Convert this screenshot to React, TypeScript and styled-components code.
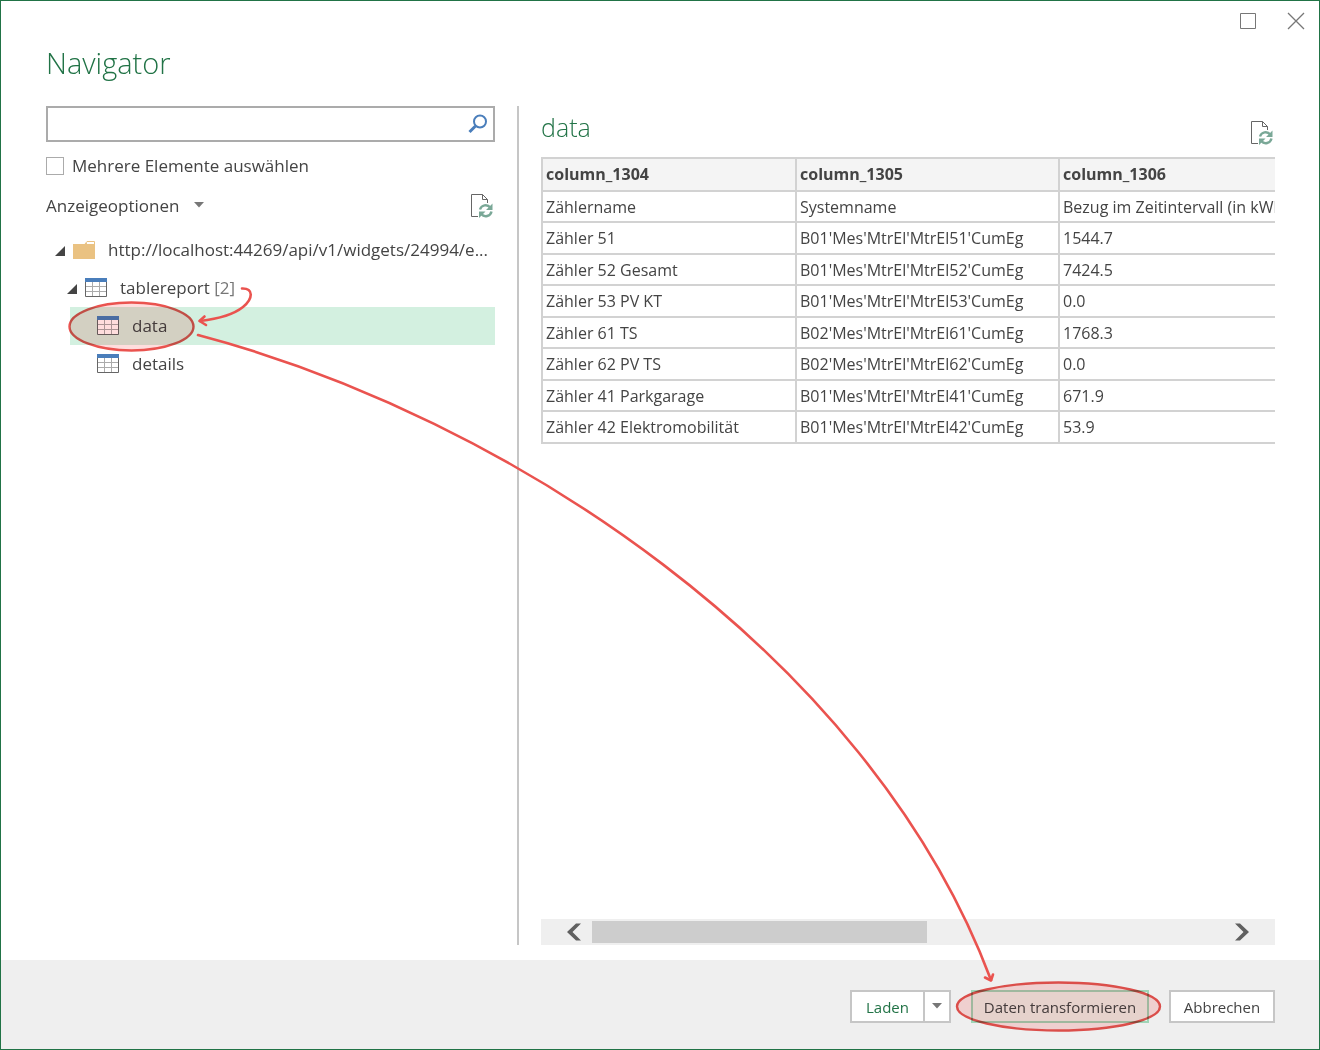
import React, { useState } from "react";
import styled, { createGlobalStyle } from "styled-components";

const green = "#217346";
const ink = "#444444";
const line = "#d2d2d2";
const fontStack = `"Open Sans", "Noto Sans", sans-serif`;

const GlobalStyle = createGlobalStyle`
  *, *::before, *::after { box-sizing: border-box; }
  body { margin: 0; background: #ffffff; }
  button, input { font: inherit; color: inherit; }
`;

const Dialog = styled.div`
  position: relative;
  display: flex;
  flex-direction: column;
  min-height: 100vh;
  border: 1px solid ${green};
  background: #ffffff;
  color: ${ink};
  font-family: ${fontStack};
  font-size: 17px;
  line-height: 24px;
  overflow: hidden;
`;

const WindowControls = styled.div`
  display: flex;
  justify-content: flex-end;
  gap: 24px;
  padding: 8px 11px 0;
`;

const PlainButton = styled.button`
  display: flex;
  align-items: center;
  justify-content: center;
  padding: 0;
  border: 0;
  background: transparent;
`;

const ControlButton = styled(PlainButton)`
  width: 24px;
  height: 24px;
`;

const Title = styled.h1`
  margin: 0;
  padding: 10px 45px 23px;
  color: ${green};
  font-size: 29px;
  font-weight: 300;
  line-height: 40px;
`;

const Content = styled.main`
  flex: 1;
  display: grid;
  grid-template-columns: 449px minmax(0, 1fr);
  gap: 22px;
  padding: 0 44px 15px 45px;
`;

const Sidebar = styled.section`
  display: flex;
  flex-direction: column;
  min-width: 0;
`;

const SearchBox = styled.div`
  display: flex;
  height: 36px;
  border: 2px solid #ababab;
`;

const SearchInput = styled.input`
  flex: 1;
  min-width: 0;
  padding: 0 8px;
  border: 0;
  outline: 0;
  background: transparent;
`;

const SearchButton = styled(PlainButton)`
  width: 30px;
`;

const CheckLabel = styled.label`
  display: flex;
  align-items: center;
  gap: 8px;
  margin-top: 12px;
`;

const Checkbox = styled.input`
  appearance: none;
  width: 18px;
  height: 18px;
  margin: 0;
  border: 1px solid #ababab;
  background: #ffffff;
  &:checked { background: ${green}; }
`;

const OptionsRow = styled.div`
  display: flex;
  align-items: center;
  justify-content: space-between;
  height: 26px;
  margin-top: 15px;
  padding-right: 2px;
`;

const OptionsButton = styled(PlainButton)`
  gap: 15px;
`;

const Tree = styled.ul`
  margin: 12px 0 0;
  padding: 0;
  list-style: none;
`;

const TreeRow = styled.li<{ $level: number; $selected?: boolean }>`
  display: flex;
  align-items: center;
  gap: 8px;
  height: 38px;
  margin-left: ${(p) => p.$level * 12}px;
  padding-left: ${(p) => (p.$level === 2 ? 27 : 9)}px;
  background: ${(p) => (p.$selected ? "#d3f0e0" : "transparent")};
`;

const TreeLabel = styled.span`
  flex: 1;
  min-width: 0;
  padding-left: 5px;
  white-space: nowrap;
`;

const Count = styled.span`
  color: #777777;
`;

const Preview = styled.section`
  display: flex;
  flex-direction: column;
  min-width: 0;
  padding-left: 22px;
  border-left: 2px solid #c6c6c6;
`;

const PreviewHeader = styled.header`
  display: flex;
  align-items: flex-end;
  justify-content: space-between;
  height: 51px;
  padding: 0 2px 12px 0;
`;

const PreviewTitle = styled.h2`
  margin: 0;
  color: ${green};
  font-size: 25px;
  font-weight: 300;
  line-height: 36px;
`;

const TableViewport = styled.div`
  flex: 1;
  overflow: hidden;
`;

const DataTable = styled.table`
  table-layout: fixed;
  width: 1456px;
  border-collapse: separate;
  border-spacing: 0;
  border-top: 2px solid ${line};
  border-left: 2px solid ${line};
  font-size: 16px;
  line-height: 20px;
`;

const HeadCell = styled.th`
  height: 33px;
  padding: 0 3px 1px;
  border-right: 2px solid ${line};
  border-bottom: 2px solid ${line};
  background: #f4f4f4;
  font-weight: 700;
  text-align: left;
`;

const Column = styled.col<{ $width?: number }>`
  width: ${(p) => (p.$width ? `${p.$width}px` : "auto")};
`;

const BodyRow = styled.tr`
  height: 31px;
  &:nth-child(even) { height: 32px; }
`;

const Cell = styled.td`
  padding: 0 3px;
  border-right: 2px solid ${line};
  border-bottom: 2px solid ${line};
  white-space: nowrap;
`;

const ScrollBar = styled.div`
  display: flex;
  align-items: center;
  height: 26px;
  padding: 0 22px;
  background: #efefef;
`;

const ScrollButton = styled(PlainButton)`
  width: 22px;
  height: 26px;
`;

const Track = styled.div`
  flex: 1;
  padding: 0 7px;
`;

const Thumb = styled.div`
  width: 53%;
  height: 22px;
  background: #cdcdcd;
`;

const Footer = styled.footer`
  display: flex;
  justify-content: flex-end;
  gap: 20px;
  padding: 30px 44px 26px;
  background: #efefef;
`;

const FooterButton = styled.button<{ $width: number; $tone?: "load" | "primary" }>`
  min-width: ${(p) => p.$width}px;
  height: 33px;
  padding: 0 8px;
  border: 2px solid ${(p) => (p.$tone === "primary" ? "#9fd5b7" : "#c6c6c6")};
  background: ${(p) => (p.$tone === "primary" ? "#e6f3ec" : "#ffffff")};
  color: ${(p) => (p.$tone === "load" ? green : ink)};
  font-size: 15px;
  line-height: 24px;
`;

const SplitButton = styled.div`
  display: flex;
`;

const SplitToggle = styled(PlainButton)`
  width: 26px;
  height: 33px;
  border: 2px solid #c6c6c6;
  border-left: 0;
  background: #ffffff;
`;

const Annotations = styled.svg`
  position: absolute;
  top: -1px;
  left: -1px;
  pointer-events: none;
`;

const HighlightLayer = styled(Annotations)`
  mix-blend-mode: multiply;
`;

const CaretDown = () => (
  <svg width="10" height="8" viewBox="0 0 10 8" aria-hidden="true">
    <path d="M0 0h10L5 5.500z" fill="#777777" />
  </svg>
);

const Expander = () => (
  <svg width="10" height="12" viewBox="0 0 10 12" aria-hidden="true">
    <path d="M10 2v10H0z" fill="#444444" />
  </svg>
);

const FolderIcon = () => (
  <svg width="22" height="20" viewBox="0 0 22 20" aria-hidden="true">
    <path d="M12 4 14 1.500h7.500V5" fill="#ffffff" stroke="#eac282" />
    <path d="M0 4h12l2-1.500V4h8v15H0z" fill="#eac282" />
  </svg>
);

const TableIcon = () => (
  <svg width="22" height="20" viewBox="0 0 22 20" aria-hidden="true">
    <path d="M.5 4v14.500h21V4" fill="#ffffff" stroke="#666666" />
    <path d="M1 8.500h20M1 13.500h20M7.500 4v14M14.500 4v14" stroke="#ababab" />
    <path d="M0 0h22v4H0z" fill="#4a7ebb" />
  </svg>
);

const RefreshIcon = () => (
  <svg width="22" height="24" viewBox="0 0 22 24" aria-hidden="true">
    <path d="M7 22.500H.5V.5h11l5 5V9M11.500.5v5h5" fill="none" stroke="#666666" />
    <g fill="none" stroke="#7aa897" strokeWidth="2.400">
      <path d="M9 15.500a5.800 5.800 0 0 1 10.200-2" />
      <path d="M20.500 17.500a5.800 5.800 0 0 1-10.200 2.500" />
    </g>
    <path d="M21.500 9.500v6.500h-6.500zM8 24v-6.500h6.500z" fill="#7aa897" />
  </svg>
);

const SearchIcon = () => (
  <svg width="20" height="20" viewBox="0 0 20 20" fill="none" stroke="#4a7ebb" aria-hidden="true">
    <circle cx="12" cy="7.500" r="6" strokeWidth="2" />
    <path d="M7.500 12 1.500 18" strokeWidth="3" />
  </svg>
);

const Chevron = ({ right }: { right?: boolean }) => (
  <svg width="14" height="18" viewBox="0 0 14 18" aria-hidden="true">
    <path
      d={right ? "M0 0.500h5l9 8.500-9 8.500H0L8.500 9z" : "M14 .5H9L0 9l9 8.500h5L5.500 9z"}
      fill="#606060"
    />
  </svg>
);

const columns = ["column_1304", "column_1305", "column_1306"];

const rows = [
  ["Zählername", "Systemname", "Bezug im Zeitintervall (in kWh)"],
  ["Zähler 51", "B01'Mes'MtrEl'MtrEl51'CumEg", "1544.7"],
  ["Zähler 52 Gesamt", "B01'Mes'MtrEl'MtrEl52'CumEg", "7424.5"],
  ["Zähler 53 PV KT", "B01'Mes'MtrEl'MtrEl53'CumEg", "0.0"],
  ["Zähler 61 TS", "B02'Mes'MtrEl'MtrEl61'CumEg", "1768.3"],
  ["Zähler 62 PV TS", "B02'Mes'MtrEl'MtrEl62'CumEg", "0.0"],
  ["Zähler 41 Parkgarage", "B01'Mes'MtrEl'MtrEl41'CumEg", "671.9"],
  ["Zähler 42 Elektromobilität", "B01'Mes'MtrEl'MtrEl42'CumEg", "53.9"],
];

export default function App() {
  const [query, setQuery] = useState("");
  const [multiple, setMultiple] = useState(false);

  return (
    <>
      <GlobalStyle />
      <Dialog role="dialog" aria-labelledby="dialog-title">
        <WindowControls>
          <ControlButton aria-label="Maximieren">
            <svg width="16" height="16" viewBox="0 0 16 16" aria-hidden="true">
              <path d="M.5.5h15v15H.5z" fill="none" stroke="#777777" />
            </svg>
          </ControlButton>
          <ControlButton aria-label="Schließen">
            <svg width="18" height="18" viewBox="0 0 18 18" aria-hidden="true">
              <path d="m1 1 16 16M17 1 1 17" stroke="#777777" strokeWidth="1.300" />
            </svg>
          </ControlButton>
        </WindowControls>
        <Title id="dialog-title">Navigator</Title>

        <Content>
          <Sidebar>
            <SearchBox>
              <SearchInput
                aria-label="Suchen"
                value={query}
                onChange={(e) => setQuery(e.target.value)}
              />
              <SearchButton aria-label="Suche starten">
                <SearchIcon />
              </SearchButton>
            </SearchBox>
            <CheckLabel>
              <Checkbox
                type="checkbox"
                checked={multiple}
                onChange={(e) => setMultiple(e.target.checked)}
              />
              Mehrere Elemente auswählen
            </CheckLabel>
            <OptionsRow>
              <OptionsButton>
                Anzeigeoptionen
                <CaretDown />
              </OptionsButton>
              <PlainButton aria-label="Aktualisieren">
                <RefreshIcon />
              </PlainButton>
            </OptionsRow>
            <Tree>
              <TreeRow $level={0}>
                <Expander />
                <FolderIcon />
                <TreeLabel>http://localhost:44269/api/v1/widgets/24994/e...</TreeLabel>
              </TreeRow>
              <TreeRow $level={1}>
                <Expander />
                <TableIcon />
                <TreeLabel>
                  tablereport <Count>[2]</Count>
                </TreeLabel>
              </TreeRow>
              <TreeRow $level={2} $selected>
                <TableIcon />
                <TreeLabel>data</TreeLabel>
              </TreeRow>
              <TreeRow $level={2}>
                <TableIcon />
                <TreeLabel>details</TreeLabel>
              </TreeRow>
            </Tree>
          </Sidebar>

          <Preview>
            <PreviewHeader>
              <PreviewTitle>data</PreviewTitle>
              <PlainButton aria-label="Vorschau aktualisieren">
                <RefreshIcon />
              </PlainButton>
            </PreviewHeader>
            <TableViewport>
              <DataTable>
                <colgroup>
                  <Column $width={254} />
                  <Column $width={263} />
                  <Column />
                </colgroup>
                <thead>
                  <tr>
                    {columns.map((name) => (
                      <HeadCell key={name}>{name}</HeadCell>
                    ))}
                  </tr>
                </thead>
                <tbody>
                  {rows.map((row) => (
                    <BodyRow key={row[0]}>
                      {row.map((value, i) => (
                        <Cell key={i}>{value}</Cell>
                      ))}
                    </BodyRow>
                  ))}
                </tbody>
              </DataTable>
            </TableViewport>
            <ScrollBar>
              <ScrollButton aria-label="Nach links">
                <Chevron />
              </ScrollButton>
              <Track>
                <Thumb />
              </Track>
              <ScrollButton aria-label="Nach rechts">
                <Chevron right />
              </ScrollButton>
            </ScrollBar>
          </Preview>
        </Content>

        <Footer>
          <SplitButton>
            <FooterButton $width={75} $tone="load">Laden</FooterButton>
            <SplitToggle aria-label="Weitere Ladeoptionen">
              <CaretDown />
            </SplitToggle>
          </SplitButton>
          <FooterButton $width={178} $tone="primary">Daten transformieren</FooterButton>
          <FooterButton $width={106}>Abbrechen</FooterButton>
        </Footer>

        <HighlightLayer width="1320" height="1050" viewBox="0 0 1320 1050" aria-hidden="true">
          <g fill="#ffdddd" stroke="#ea534f" strokeWidth="2.400">
            <ellipse cx="131.500" cy="326.500" rx="62" ry="24" />
            <ellipse cx="1058.500" cy="1006.500" rx="101.500" ry="24" />
          </g>
        </HighlightLayer>
        <Annotations width="1320" height="1050" viewBox="0 0 1320 1050" aria-hidden="true">
          <g fill="none" stroke="#ea534f" strokeWidth="2.600" strokeLinecap="round" strokeLinejoin="round">
            <path d="M242 288.500C254 288 253 299 243 307C233 315 217 319 200 321" />
            <path d="M204.500 316.500 199.500 321 206 325" />
            <path d="M198 335C505 416 868 652 991 980" />
            <path d="M985 977.500 991 980.500 993 974.500" />
          </g>
        </Annotations>
      </Dialog>
    </>
  );
}
